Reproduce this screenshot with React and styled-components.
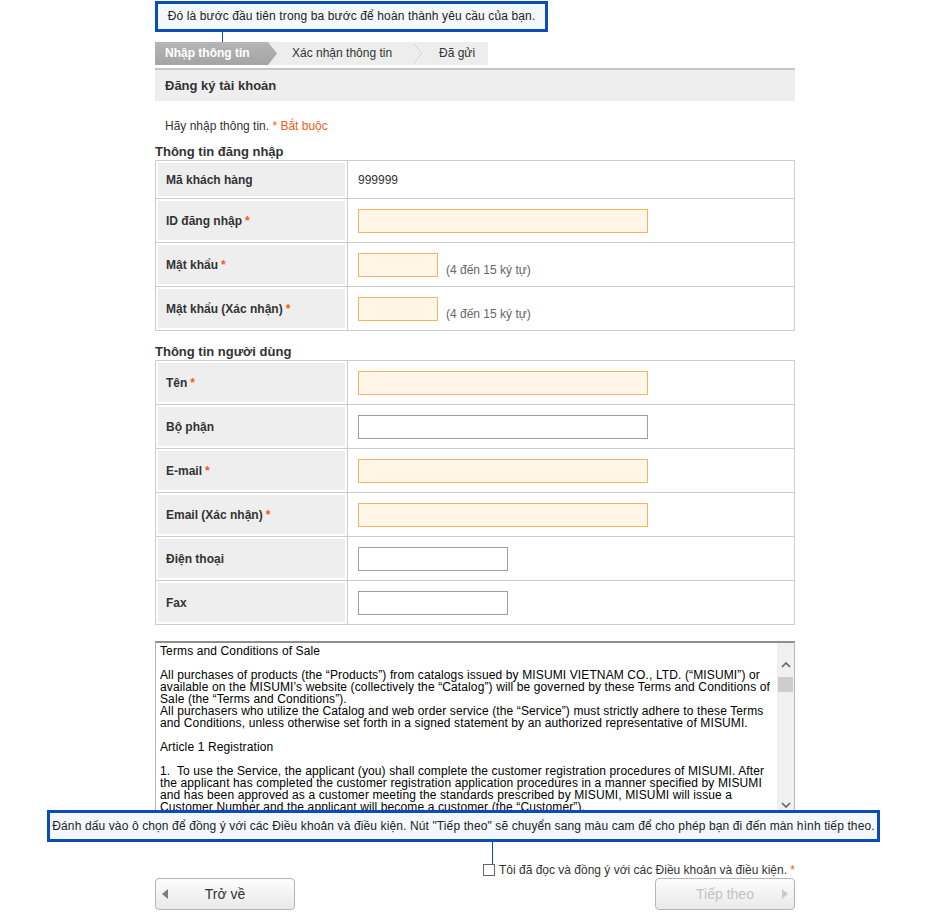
import React from "react";
import styled, { createGlobalStyle } from "styled-components";

const BLUE = "#0a4db4";
const ORANGE = "#ee5d22";

const GlobalStyle = createGlobalStyle`
  body {
    margin: 0;
    background: #fff;
    font-family: "Liberation Sans", Arial, sans-serif;
    color: #333;
  }
`;

const Page = styled.div`
  width: 640px;
  margin: 0 auto;
  padding: 1px 0 10px;
`;

// blue annotation boxes
const Note = styled.div`
  position: relative;
  box-sizing: border-box;
  width: ${(p) => p.$w}px;
  height: 31px;
  border: 3px solid ${BLUE};
  background: #f4f7fb;
  color: #222;
  font-size: 12px;
  letter-spacing: 0.12px;
  line-height: 25px;
  text-align: center;
  white-space: nowrap;
  &::after {
    content: "";
    position: absolute;
    left: ${(p) => p.$pin}px;
    top: 100%;
    width: 1px;
    height: ${(p) => p.$pinH}px;
    background: ${BLUE};
  }
`;

const BottomNote = styled(Note)`
  position: absolute;
  top: 169px;
  left: -108px;
  height: 32px;
  line-height: 26px;
  z-index: 2;
`;

const StepBar = styled.div`
  display: flex;
  width: 333px;
  height: 23px;
  margin-top: 10px;
  background: #ededed;
  font-size: 12px;
  line-height: 23px;
`;

const Step = styled.div`
  box-sizing: border-box;
  width: ${(p) => p.$w}px;
  padding-left: ${(p) => p.$pad}px;
  white-space: nowrap;
  color: ${(p) => (p.$active ? "#fff" : "#333")};
  font-weight: ${(p) => (p.$active ? "bold" : "normal")};
  background: ${(p) => (p.$active ? "linear-gradient(#b5b5b5, #a4a4a4)" : "transparent")};
  clip-path: ${(p) =>
    p.$active
      ? "polygon(0 0, calc(100% - 9px) 0, 100% 50%, calc(100% - 9px) 100%, 0 100%)"
      : "none"};
`;

const PageTitle = styled.h1`
  box-sizing: border-box;
  height: 33px;
  margin: 3px 0 0;
  padding-left: 10px;
  border-top: 2px solid #c6c6c6;
  background: #eeeeee;
  font-size: 13px;
  font-weight: bold;
  line-height: 31px;
  color: #333;
`;

const Intro = styled.p`
  margin: 17px 0 0;
  padding-left: 10px;
  font-size: 12px;
  line-height: 16px;
  color: #333;
`;

const Req = styled.span`
  color: ${ORANGE};
`;

const SectionTitle = styled.h2`
  margin: ${(p) => p.$top}px 0 0;
  font-size: 13px;
  font-weight: bold;
  line-height: 16px;
  color: #333;
`;

const Table = styled.div`
  border: 1px solid #cccccc;
  border-bottom: none;
`;

const Row = styled.div`
  display: grid;
  grid-template-columns: 192px 1fr;
  box-sizing: border-box;
  height: ${(p) => p.$h || 44}px;
  border-bottom: 1px solid #cccccc;
`;

const Label = styled.div`
  display: flex;
  align-items: center;
  padding-left: 10px;
  background: #eeeeee;
  box-shadow: inset 0 0 0 2px #fff;
  border-right: 1px solid #cccccc;
  font-size: 12px;
  font-weight: bold;
  color: #333;
  & span {
    margin-left: 3px;
    color: ${ORANGE};
  }
`;

const Value = styled.div`
  display: flex;
  align-items: center;
  padding-left: 10px;
  font-size: 12px;
  color: #333;
`;

const Field = styled.div`
  display: flex;
  align-items: flex-end;
`;

const Input = styled.input`
  box-sizing: border-box;
  width: ${(p) => p.$w || 290}px;
  height: 24px;
  margin: 0;
  padding: 0 4px;
  border: 1px solid ${(p) => (p.$req ? "#f7b360" : "#a0a0a0")};
  background: ${(p) => (p.$req ? "#fff6e8" : "#fff")};
  outline: none;
  font: 12px "Liberation Sans", Arial, sans-serif;
`;

const Hint = styled.span`
  margin-left: 8px;
  line-height: 14px;
  color: #666;
`;

const TermsWrap = styled.div`
  position: relative;
  margin-top: 16px;
`;

const TermsBox = styled.div`
  display: flex;
  box-sizing: border-box;
  height: 172px;
  border: 1px solid #b8b8b8;
  border-top: 2px solid #8f8f8f;
  overflow: hidden;
`;

const TermsText = styled.div`
  flex: 1;
  padding: 2px 4px;
  font-size: 12px;
  letter-spacing: 0.12px;
  line-height: 12px;
  color: #000;
  white-space: pre;
  overflow: hidden;
`;

const ScrollTrack = styled.div`
  display: flex;
  flex-direction: column;
  align-items: center;
  width: 17px;
  padding: 19px 0 4px;
  box-sizing: border-box;
  background: #f0f0f0;
`;

const Thumb = styled.div`
  width: 15px;
  height: 15px;
  margin: 9px 0 auto;
  background: #cdcdcd;
`;

const AgreeRow = styled.label`
  display: flex;
  justify-content: flex-end;
  align-items: center;
  height: 16px;
  margin-top: 49px;
  font-size: 12px;
  color: #333;
`;

const Check = styled.input`
  appearance: none;
  box-sizing: border-box;
  width: 12px;
  height: 12px;
  margin: 0 4px 0 0;
  border: 1px solid #666;
  background: #fff;
`;

const Buttons = styled.div`
  display: flex;
  justify-content: space-between;
`;

const Button = styled.button`
  display: grid;
  grid-template-columns: 6px 1fr 6px;
  align-items: center;
  box-sizing: border-box;
  width: 140px;
  height: 32px;
  padding: 0 6px;
  border: 1px solid #b5b5b5;
  border-radius: 4px;
  background: linear-gradient(#fdfdfd, #e9e9e9);
  font: 14px "Liberation Sans", Arial, sans-serif;
  color: ${(p) => (p.disabled ? "#c2c2c2" : "#333")};
  cursor: ${(p) => (p.disabled ? "default" : "pointer")};
`;

const Triangle = styled.span`
  grid-column: ${(p) => (p.$right ? 3 : 1)};
  grid-row: 1;
  width: 0;
  height: 0;
  border-top: 5px solid transparent;
  border-bottom: 5px solid transparent;
  ${(p) =>
    p.$right
      ? `border-left: 6px solid ${p.$color};`
      : `border-right: 6px solid ${p.$color};`}
`;

const ButtonText = styled.span`
  grid-column: 2;
  grid-row: 1;
  text-align: center;
`;

const Chevron = ({ down }) => (
  <svg width="10" height="6" viewBox="0 0 10 6">
    <polyline
      points={down ? "1,1 5,5 9,1" : "1,5 5,1 9,5"}
      fill="none"
      stroke="#606060"
      strokeWidth="1.6"
    />
  </svg>
);

const StepSeparator = () => (
  <svg width="10" height="23" viewBox="0 0 10 23">
    <polyline points="0,0 9,11.5 0,23" fill="none" stroke="#fafafa" strokeWidth="1" />
    <polyline points="-1,0 8,11.5 -1,23" fill="none" stroke="#cfcfcf" strokeWidth="1" />
  </svg>
);

const terms = [
  "Terms and Conditions of Sale",
  "",
  "All purchases of products (the \u201cProducts\u201d) from catalogs issued by MISUMI VIETNAM CO., LTD. (\u201cMISUMI\u201d) or",
  "available on the MISUMI\u2019s website (collectively the \u201cCatalog\u201d) will be governed by these Terms and Conditions of",
  "Sale (the \u201cTerms and Conditions\u201d).",
  "All purchasers who utilize the Catalog and web order service (the \u201cService\u201d) must strictly adhere to these Terms",
  "and Conditions, unless otherwise set forth in a signed statement by an authorized representative of MISUMI.",
  "",
  "Article 1 Registration",
  "",
  "1.  To use the Service, the applicant (you) shall complete the customer registration procedures of MISUMI. After",
  "the applicant has completed the customer registration application procedures in a manner specified by MISUMI",
  "and has been approved as a customer meeting the standards prescribed by MISUMI, MISUMI will issue a",
  "Customer Number and the applicant will become a customer (the \u201cCustomer\u201d).",
].join("\n");

const loginRows = [
  { label: "ID đăng nhập", req: true, w: 290 },
  { label: "Mật khẩu", req: true, w: 80, hint: true },
  { label: "Mật khẩu (Xác nhận)", req: true, w: 80, hint: true },
];

const userRows = [
  { label: "Tên", req: true, w: 290 },
  { label: "Bộ phận", req: false, w: 290 },
  { label: "E-mail", req: true, w: 290 },
  { label: "Email (Xác nhận)", req: true, w: 290 },
  { label: "Điện thoại", req: false, w: 150 },
  { label: "Fax", req: false, w: 150 },
];

const FormRow = ({ label, req, w, hint }) => (
  <Row>
    <Label>
      {label}
      {req && <span>*</span>}
    </Label>
    <Value>
      <Field>
        <Input $w={w} $req={req} />
        {hint && <Hint>(4 đến 15 ký tự)</Hint>}
      </Field>
    </Value>
  </Row>
);

const App = () => {
  return (
    <Page>
      <GlobalStyle />
      <Note $w={393} $pin={64} $pinH={15}>
        Đó là bước đầu tiên trong ba bước để hoàn thành yêu cầu của bạn.
      </Note>
      <StepBar>
        <Step $active $w={122} $pad={10}>
          Nhập thông tin
        </Step>
        <Step $w={137} $pad={15}>
          Xác nhận thông tin
        </Step>
        <StepSeparator />
        <Step $w={64} $pad={15}>
          Đã gửi
        </Step>
      </StepBar>

      <PageTitle>Đăng ký tài khoản</PageTitle>
      <Intro>
        Hãy nhập thông tin. <Req>* Bắt buộc</Req>
      </Intro>

      <SectionTitle $top={10}>Thông tin đăng nhập</SectionTitle>
      <Table>
        <Row $h={38}>
          <Label>Mã khách hàng</Label>
          <Value>999999</Value>
        </Row>
        {loginRows.map((r) => (
          <FormRow key={r.label} {...r} />
        ))}
      </Table>

      <SectionTitle $top={13}>Thông tin người dùng</SectionTitle>
      <Table>
        {userRows.map((r) => (
          <FormRow key={r.label} {...r} />
        ))}
      </Table>

      <TermsWrap>
        <TermsBox>
          <TermsText>{terms}</TermsText>
          <ScrollTrack>
            <Chevron />
            <Thumb />
            <Chevron down />
          </ScrollTrack>
        </TermsBox>
        <BottomNote $w={833} $pin={442} $pinH={25}>
          Đánh dấu vào ô chọn để đồng ý với các Điều khoản và điều kiện. Nút "Tiếp theo" sẽ chuyển sang
          màu cam để cho phép bạn đi đến màn hình tiếp theo.
        </BottomNote>
      </TermsWrap>

      <AgreeRow>
        <Check type="checkbox" />
        Tôi đã đọc và đồng ý với các Điều khoản và điều kiện.&nbsp;<Req>*</Req>
      </AgreeRow>

      <Buttons>
        <Button type="button">
          <Triangle $color="#7c7c7c" />
          <ButtonText>Trở về</ButtonText>
        </Button>
        <Button type="button" disabled>
          <ButtonText>Tiếp theo</ButtonText>
          <Triangle $right $color="#cccccc" />
        </Button>
      </Buttons>
    </Page>
  );
};

export default App;
